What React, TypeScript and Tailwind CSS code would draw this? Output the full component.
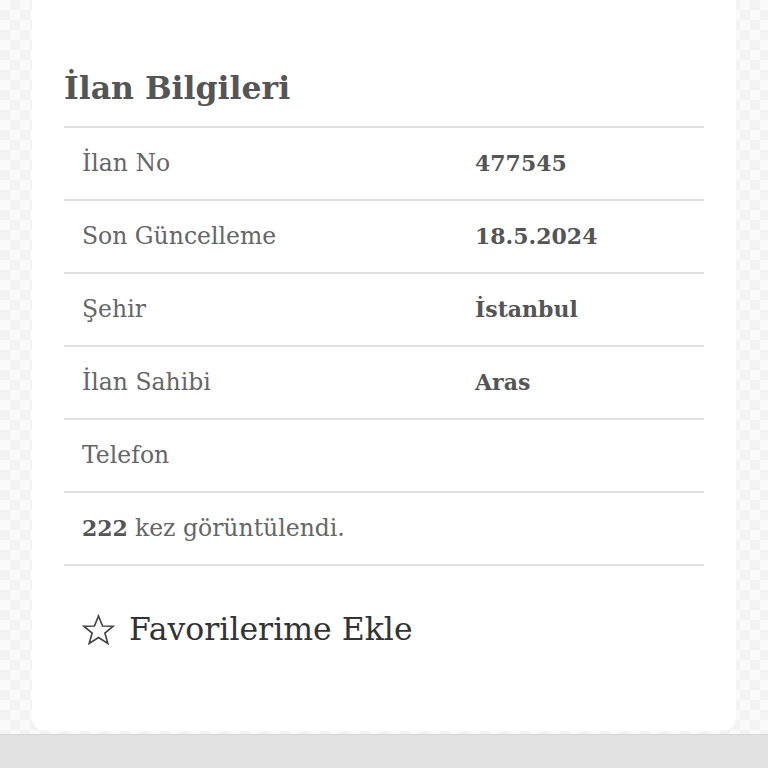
import React from 'react';

const rows = [
  { label: 'İlan No', value: '477545' },
  { label: 'Son Güncelleme', value: '18.5.2024' },
  { label: 'Şehir', value: 'İstanbul' },
  { label: 'İlan Sahibi', value: 'Aras' },
  { label: 'Telefon', value: '' },
];

const StarIcon = () => (
  <svg width="33" height="31" viewBox="0 0 34 32" fill="none" stroke="#444" strokeWidth="1.7" strokeLinejoin="miter">
    <path d="M17 2 L21.2 12.4 L32.2 12.6 L23.6 19.6 L26.6 30.4 L17 24.2 L7.4 30.4 L10.4 19.6 L1.8 12.6 L12.8 12.4 Z" />
  </svg>
);

export default function App() {
  return (
    <div
      className="flex h-screen w-full flex-col overflow-hidden"
      style={{ fontFamily: '"DejaVu Serif", "Liberation Serif", serif' }}
    >
      {/* Patterned page background */}
      <div className="flex flex-1 flex-col bg-[repeating-conic-gradient(#f3f3f3_0_25%,#fafafa_0_50%)] bg-[length:20px_20px] px-8 pb-[3px]">
        <div className="-mt-[12px] flex flex-1 flex-col rounded-[14px] bg-white px-8 pt-[80px]">
          <h2 className="mb-[18px] text-[31.5px] font-bold leading-[40px] text-[#555]">İlan Bilgileri</h2>

          <div className="border-t-2 border-[#e0e0e0]">
            {rows.map((row) => (
              <div key={row.label} className="grid h-[73px] grid-cols-[411px_1fr] items-center border-b-2 border-[#e0e0e0]">
                <span className="pl-[18px] text-[23.5px] text-[#666]">{row.label}</span>
                <span className="text-[22px] font-bold text-[#555]">{row.value}</span>
              </div>
            ))}
            <div className="flex h-[73px] items-center border-b-2 border-[#e0e0e0] pl-[18px] text-[23.5px] text-[#666]">
              <span className="text-[22px] font-bold text-[#555]">222</span>
              <span className="ml-[7px]">kez görüntülendi.</span>
            </div>
          </div>

          <div className="mt-[44px] flex items-center gap-[14px] pl-[18px]">
            <StarIcon />
            <span className="text-[31.5px] leading-[38px] text-[#333]">Favorilerime Ekle</span>
          </div>
        </div>
      </div>

      {/* Bottom bar */}
      <div className="h-[34px] shrink-0 border-t border-[#d6d6d6] bg-[#e2e2e2]" />
    </div>
  );
}
